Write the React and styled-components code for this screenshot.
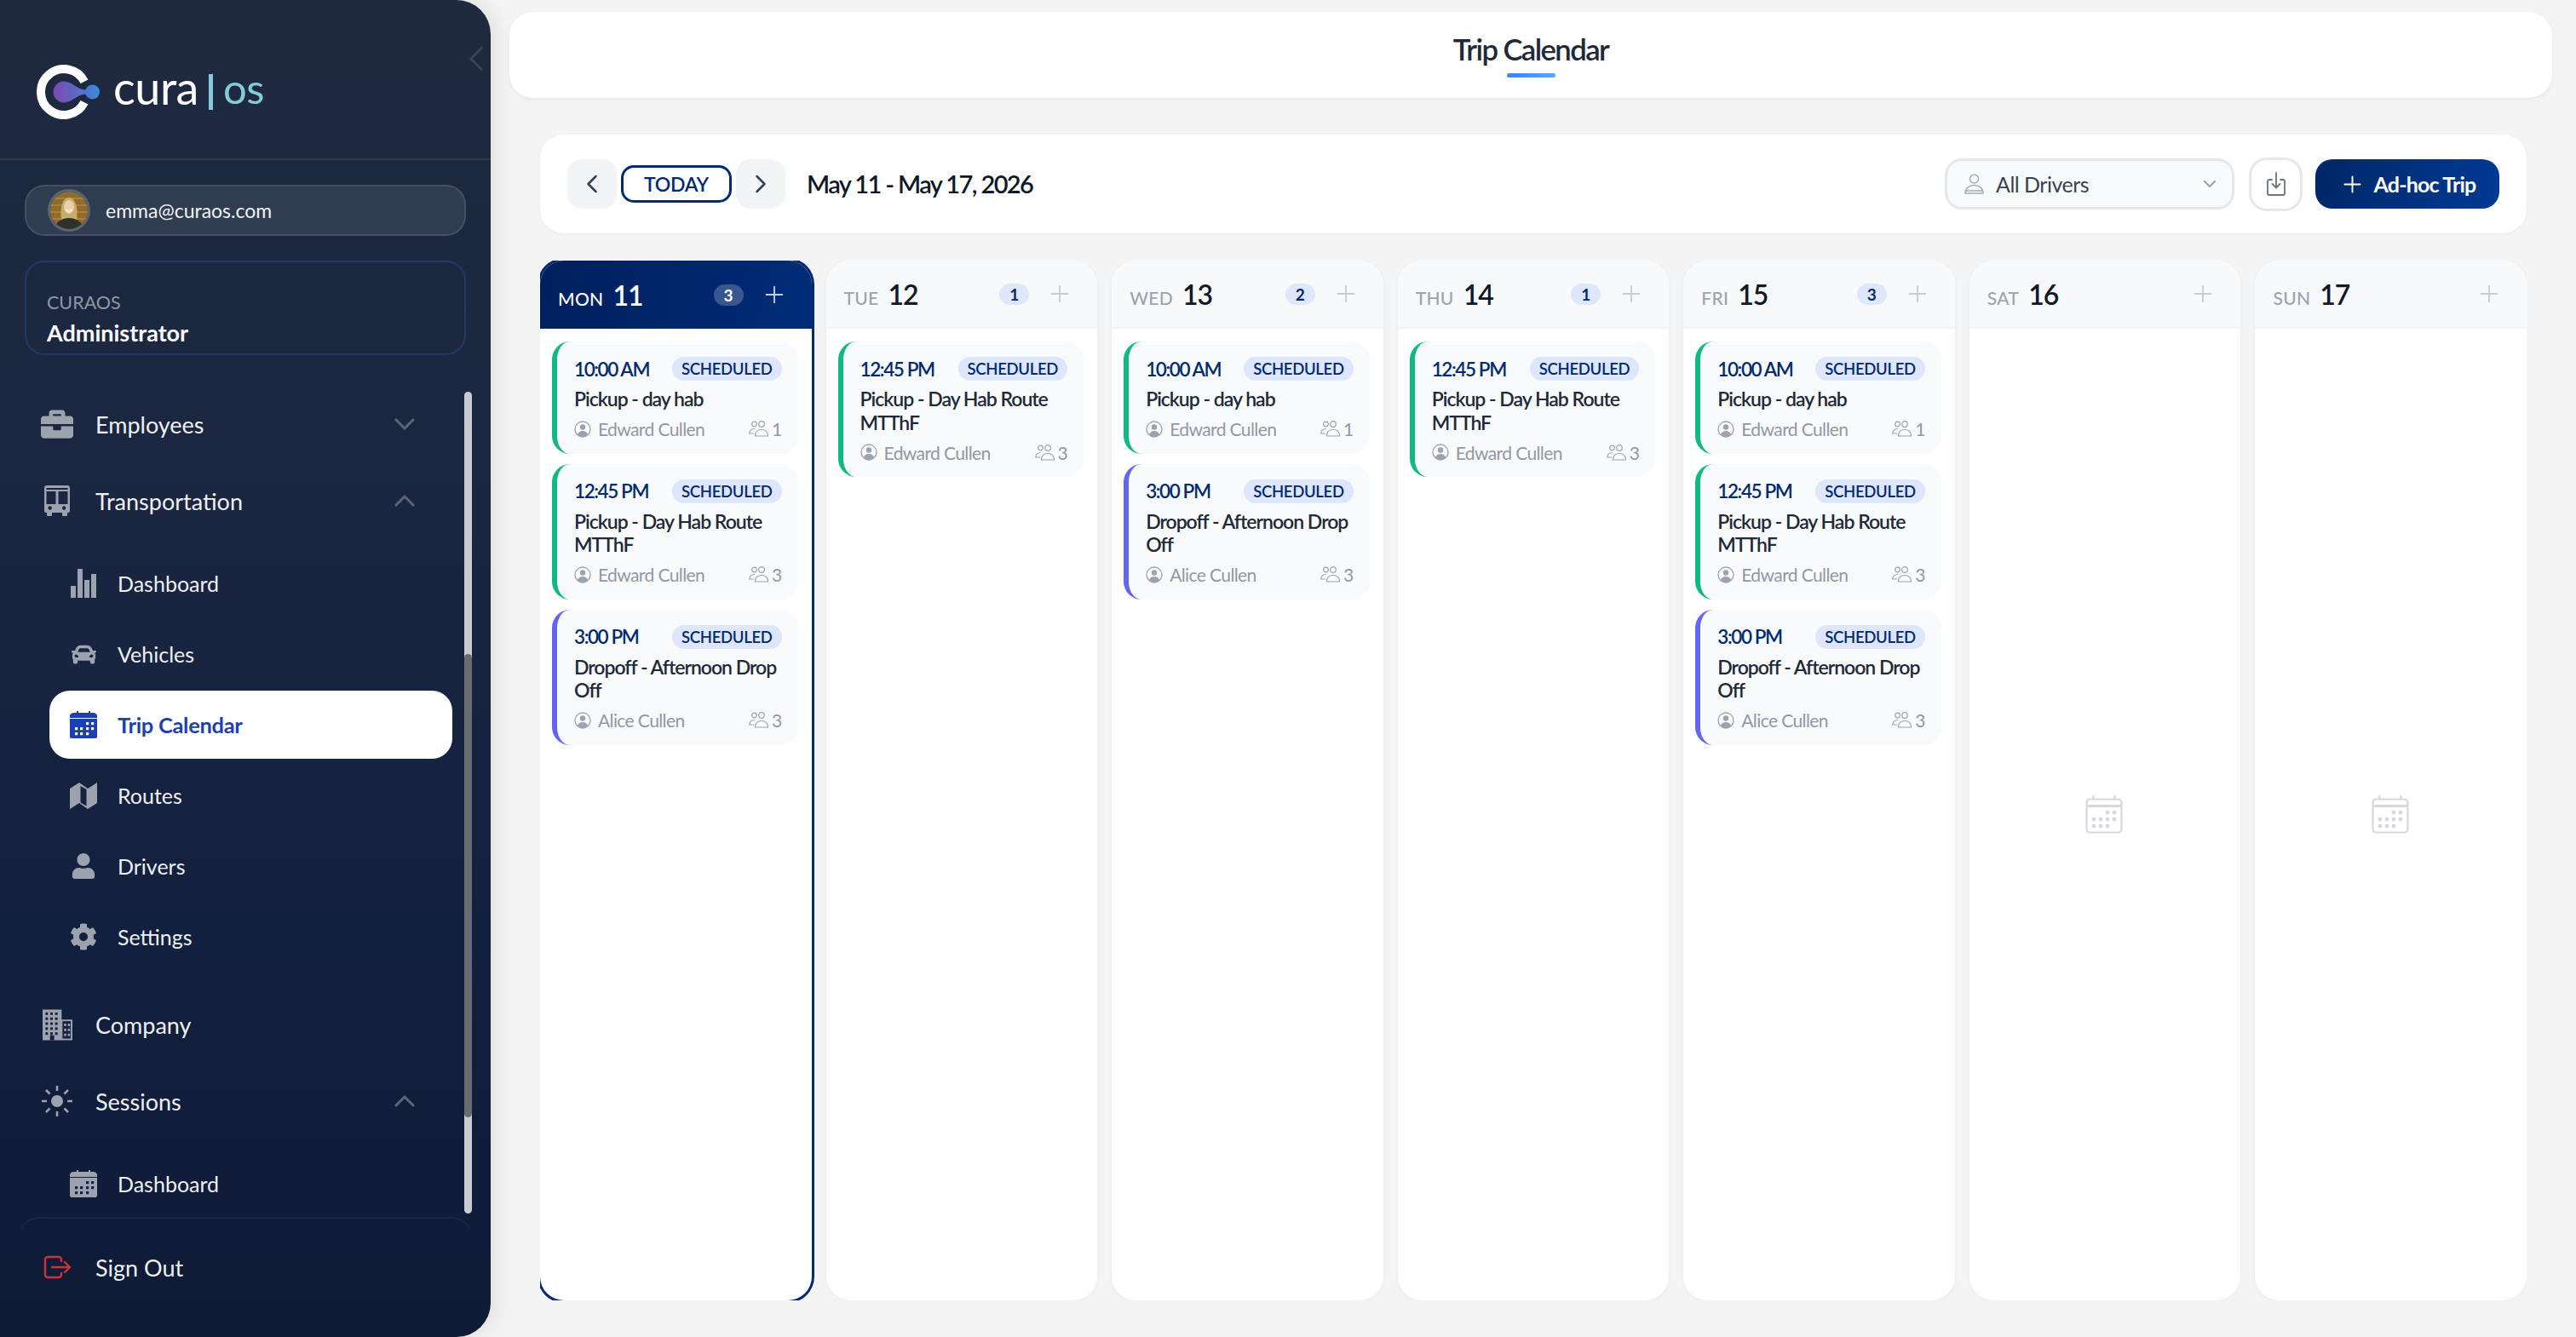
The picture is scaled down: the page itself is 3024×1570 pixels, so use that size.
import React from 'react';
import styled, { createGlobalStyle } from 'styled-components';
import { ChevronDown, ChevronLeft, ChevronRight, ChevronUp, Plus } from 'lucide-react';
import { FaBriefcase, FaCar, FaCog, FaUser } from 'react-icons/fa';

const NAVY = '#002a6e';

const GlobalStyle = createGlobalStyle`
  * { box-sizing: border-box; }
  html, body { margin: 0; padding: 0; height: 100%; }
  body {
    background: #f4f4f5;
    font-family: Lato, 'Liberation Sans', sans-serif;
    color: #1f2937;
  }
`;

/* ---------- drawings ---------- */

const LogoMark = () => (
  <svg width="74" height="64" viewBox="0 0 74 64">
    <defs>
      <linearGradient id="drop" gradientUnits="userSpaceOnUse" x1="19" y1="32" x2="74" y2="32">
        <stop offset="0" stopColor="#7d48ae" />
        <stop offset="1" stopColor="#3a8ad8" />
      </linearGradient>
    </defs>
    <path d="M56 19.7A27 27 0 1 0 56 44.3" fill="none" stroke="#fff" strokeWidth="10" />
    <path
      d="M32 19.5C42 19.5 46 29 58 29.5L58 34.5C46 35 42 44.5 32 44.5A12.5 12.5 0 0 1 32 19.5Z"
      fill="url(#drop)"
    />
    <circle cx="65.5" cy="32" r="8.5" fill="url(#drop)" />
  </svg>
);

const AvatarPhoto = () => (
  <svg width="44" height="44" viewBox="0 0 44 44">
    <rect width="44" height="44" fill="#8f6b2c" />
    <path d="M0 8h44M0 16h44M0 24h44M0 32h44" stroke="#b5873f" strokeWidth="1.4" />
    <path d="M13 33C11 17 15 7 22 7s11 10 9 26Z" fill="#c9ab68" />
    <ellipse cx="22" cy="18" rx="6" ry="8" fill="#ecd0ad" />
    <path d="M18.500 21c2 2.500 5 2.500 7 0" stroke="#fff" strokeWidth="1.500" fill="none" />
    <path d="M5 44c1-8 8-13 17-13s16 5 17 13Z" fill="#2f312d" />
  </svg>
);

const BarsIcon = () => (
  <svg width="30" height="34" viewBox="0 0 30 34" fill="#9ca3af">
    <rect x="0" y="20" width="6" height="14" />
    <rect x="8" y="0" width="6" height="34" />
    <rect x="16" y="13" width="6" height="21" />
    <rect x="24" y="6" width="6" height="28" />
  </svg>
);

const BusIcon = () => (
  <svg width="30" height="36" viewBox="0 0 30 36" fill="#9ca3af">
    <path
      fillRule="evenodd"
      d="M3 0h24a3 3 0 0 1 3 3v27a2 2 0 0 1-2 2h-1v3a1 1 0 0 1-1 1h-4a1 1 0 0 1-1-1v-3H9v3a1 1 0 0 1-1 1H4a1 1 0 0 1-1-1v-3H2a2 2 0 0 1-2-2V3a3 3 0 0 1 3-3ZM2.500 3v2h25V3ZM2.500 7v15h11V7ZM16.500 7v15h11V7ZM4.500 26.500a2.200 2.200 0 1 0 4.400 0a2.200 2.200 0 1 0-4.400 0ZM21 26.500a2.200 2.200 0 1 0 4.400 0a2.200 2.200 0 1 0-4.400 0Z"
    />
  </svg>
);

const MapIcon = () => (
  <svg width="32" height="31" viewBox="0 0 32 31" fill="#9ca3af">
    <path
      fillRule="evenodd"
      d="M0 7L11 0L21 7L32 0V24L21 31L11 24L0 31ZM12.500 4V23.500L19.500 27.500V8Z"
    />
  </svg>
);

const FilledCalendar = ({ color, hole }) => (
  <svg width="32" height="32" viewBox="0 0 32 32">
    <path d="M5 2h3V0h2v2h12V0h2v2h3a5 5 0 0 1 5 3v3H0V5a5 5 0 0 1 5-3Z" fill={color} />
    <path d="M0 9h32v21a2 2 0 0 1-2 2H2a2 2 0 0 1-2-2Z" fill={color} />
    {[
      [19, 13], [25, 13],
      [6, 19], [12, 19], [19, 19], [25, 19],
      [6, 25], [12, 25], [19, 25],
    ].map(([x, y]) => (
      <rect key={`${x}-${y}`} x={x} y={y} width="3.200" height="3.200" rx=".6" fill={hole} />
    ))}
  </svg>
);

const BuildingIcon = () => {
  const bigWindows = [];
  for (let row = 0; row < 5; row += 1) {
    for (let col = 0; col < 3; col += 1) {
      bigWindows.push([3.500 + col * 5.800, 3.500 + row * 6]);
    }
  }
  const smallWindows = [[26, 17], [30.500, 17], [26, 23], [30.500, 23], [26, 29], [30.500, 29]];
  return (
    <svg width="35" height="37" viewBox="0 0 36 37">
      <path d="M0 0h23v12h13v25H0Z" fill="#9ca3af" />
      {bigWindows.map(([x, y]) => (
        <rect key={`${x}-${y}`} x={x} y={y} width="3" height="3" fill="#15213e" />
      ))}
      <rect x="9" y="31" width="5" height="6" fill="#15213e" />
      <rect x="24" y="14" width="10" height="21" fill="#15213e" />
      {smallWindows.map(([x, y]) => (
        <rect key={`${x}-${y}`} x={x} y={y} width="2.600" height="3" fill="#9ca3af" />
      ))}
    </svg>
  );
};

const SunIcon = () => (
  <svg width="36" height="36" viewBox="0 0 36 36" stroke="#9ca3af" strokeWidth="2.600" fill="#9ca3af">
    <circle cx="18" cy="18" r="7" stroke="none" />
    <path d="M18 0v6M18 30v6M0 18h6M30 18h6M5 5l4.500 4.500M26.500 26.500L31 31M5 31l4.500-4.500M26.500 9.500L31 5" />
  </svg>
);

const SignOutIcon = () => (
  <svg width="33" height="28" viewBox="0 0 33 28" fill="none" stroke="#c8353b" strokeWidth="2.400" strokeLinecap="round" strokeLinejoin="round">
    <path d="M21 7V5a3 3 0 0 0-3-3H5a3 3 0 0 0-3 3v18a3 3 0 0 0 3 3h13a3 3 0 0 0 3-3v-2" />
    <path d="M10 14h21M25 8l6 6-6 6" />
  </svg>
);

const PersonRing = () => (
  <svg width="20" height="20" viewBox="0 0 20 20">
    <circle cx="10" cy="10" r="9" fill="none" stroke="#9ca3af" strokeWidth="1.300" />
    <circle cx="10" cy="7.500" r="3.200" fill="#9ca3af" />
    <path d="M3.800 16.400C5 13.200 7.300 12 10 12s5 1.200 6.200 4.400A9 9 0 0 1 3.800 16.400Z" fill="#9ca3af" />
  </svg>
);

const PeopleIcon = () => (
  <svg width="23" height="19" viewBox="0 0 23 19" fill="none" stroke="#9ca3af" strokeWidth="1.200">
    <circle cx="6.500" cy="4" r="2.800" />
    <circle cx="15" cy="4" r="3.300" />
    <path d="M7.500 18c0-5 2.800-7.500 7.500-7.500S22.500 13 22.500 18Z" />
    <path d="M7 9.500C3.500 9.500 1 11.500.6 15H6" />
  </svg>
);

const DriverIcon = () => (
  <svg width="23" height="24" viewBox="0 0 23 24" fill="none" stroke="#a3a9b5" strokeWidth="1.500">
    <circle cx="11.500" cy="6" r="5" />
    <path d="M1 23c0-6 4.500-9.500 10.500-9.500S22 17 22 23ZM1 20h21" />
  </svg>
);

const TrayDownIcon = () => (
  <svg width="22" height="28" viewBox="0 0 22 28" fill="none" stroke="#6b7280" strokeWidth="1.800" strokeLinecap="round" strokeLinejoin="round">
    <path d="M6 9H3a2 2 0 0 0-2 2v14a2 2 0 0 0 2 2h16a2 2 0 0 0 2-2V11a2 2 0 0 0-2-2h-3" />
    <path d="M11 1v17M6.500 14l4.500 4.500 4.500-4.500" />
  </svg>
);

const EmptyCalendar = () => (
  <svg width="44" height="45" viewBox="0 0 44 45" fill="none" stroke="#d5d8df" strokeWidth="2.200">
    <rect x="1.500" y="4.500" width="41" height="39" rx="4" />
    <path d="M1.500 12.500h41" strokeWidth="3" />
    <path d="M9.500 0v4M34.500 0v4" />
    <g fill="#d5d8df" stroke="none">
      {[
        [26, 20], [34, 20],
        [10, 28], [18, 28], [26, 28], [34, 28],
        [10, 36], [18, 36], [26, 36],
      ].map(([cx, cy]) => (
        <circle key={`${cx}-${cy}`} cx={cx} cy={cy} r="2.400" />
      ))}
    </g>
  </svg>
);

/* ---------- sidebar ---------- */

const Shell = styled.div`
  display: flex;
  height: 100vh;
  overflow: hidden;
  background: #f4f4f5;
`;

const Sidebar = styled.aside`
  position: relative;
  flex: 0 0 576px;
  display: flex;
  flex-direction: column;
  border-radius: 0 40px 40px 0;
  background: linear-gradient(180deg, #1f2a3f 0%, #1a2640 40%, #12203f 70%, #0f1a36 100%);
  box-shadow: 4px 0 24px rgba(0, 0, 0, 0.1);
  color: #eef0f3;
`;

const CollapseBtn = styled.span`
  position: absolute;
  top: 44px;
  right: -8px;
  color: #3a4559;
  line-height: 0;
`;

const Brand = styled.div`
  height: 188px;
  flex: none;
  display: flex;
  align-items: flex-start;
  padding: 76px 0 0 43px;
  border-bottom: 2px solid rgba(255, 255, 255, 0.07);
`;

const BrandWord = styled.div`
  display: flex;
  align-items: center;
  height: 64px;
  margin-left: 16px;
  font-size: 54px;
  line-height: 1;
  letter-spacing: -0.5px;
`;

const BrandName = styled.span`
  color: #fff;
  padding-bottom: 10px;
`;

const BrandBar = styled.i`
  display: block;
  width: 5px;
  height: 42px;
  margin: 0 12px;
  background: #84cbd7;
`;

const BrandOs = styled.span`
  color: #84cbd7;
  font-size: 49px;
  padding-bottom: 10px;
`;

const UserPill = styled.div`
  display: flex;
  align-items: center;
  height: 60px;
  margin: 29px 29px 0 29px;
  padding-left: 25px;
  gap: 18px;
  border: 2px solid rgba(255, 255, 255, 0.1);
  border-radius: 23px;
  background: #303c50;
  font-size: 23px;
  color: #f1f3f5;
`;

const Avatar = styled.span`
  width: 50px;
  height: 50px;
  flex: none;
  overflow: hidden;
  border: 3px solid #5b6473;
  border-radius: 50%;
  line-height: 0;
`;

const RoleBox = styled.div`
  height: 111px;
  margin: 29px 29px 41px 29px;
  padding: 34px 0 0 24px;
  border: 2px solid rgba(38, 72, 130, 0.55);
  border-radius: 23px;
`;

const RoleOrg = styled.div`
  font-size: 21.500px;
  line-height: 26px;
  color: #8f97a5;
`;

const RoleName = styled.div`
  margin-top: 5px;
  font-size: 27px;
  line-height: 36px;
  font-weight: 700;
  color: #fff;
`;

const Nav = styled.nav`
  position: relative;
  flex: 0 0 971px;
  overflow: hidden;
`;

const ScrollTrack = styled.div`
  position: absolute;
  top: 2px;
  left: 545px;
  width: 9px;
  height: 965px;
  border-radius: 5px;
  background: #c9cbd0;
`;

const ScrollThumb = styled.div`
  position: absolute;
  top: 308px;
  left: 0;
  width: 9px;
  height: 544px;
  border-radius: 5px;
  background: #6a6b70;
`;

const TopRow = styled.div`
  display: flex;
  align-items: center;
  width: 490px;
  height: 80px;
  margin-bottom: ${({ $after }) => $after}px;
  padding-left: 47px;
  font-size: 27px;
`;

const TopIcon = styled.span`
  display: flex;
  align-items: center;
  justify-content: center;
  width: 40px;
  flex: none;
  margin-right: 25px;
  color: #9ca3af;
`;

const RowLabel = styled.span`
  flex: 1;
`;

const Caret = styled.span`
  display: flex;
  color: #5a6473;
  line-height: 0;
  margin-right: -5px;
`;

const SubList = styled.div`
  display: flex;
  flex-direction: column;
  gap: 3px;
  margin: 17px 0 ${({ $after }) => $after}px 58px;
  width: 473px;
`;

const SubRow = styled.div`
  display: flex;
  align-items: center;
  height: 80px;
  padding-left: 20px;
  gap: 20px;
  border-radius: 24px;
  font-size: ${({ $active }) => ($active ? '25.500px' : '25px')};
  font-weight: ${({ $active }) => ($active ? 700 : 400)};
  letter-spacing: ${({ $active }) => ($active ? '-0.3px' : '0')};
  background: ${({ $active }) => ($active ? '#fff' : 'transparent')};
  color: ${({ $active }) => ($active ? '#1e40af' : '#eef0f3')};
`;

const SubIcon = styled.span`
  display: flex;
  align-items: center;
  justify-content: center;
  width: 40px;
  flex: none;
  color: #9ca3af;
`;

const SignOutWrap = styled.div`
  margin: 0 22px;
  padding-top: 17px;
  border-top: 2px solid rgba(255, 255, 255, 0.06);
  border-radius: 24px 24px 0 0;
`;

const SignOutRow = styled(TopRow)`
  padding-left: 25px;
  margin: 0;
`;

/* ---------- main ---------- */

const Main = styled.main`
  flex: 1;
  min-width: 0;
  display: flex;
  flex-direction: column;
  padding: 14px 28px 43px 22px;
`;

const TitleBar = styled.header`
  flex: none;
  height: 101px;
  display: flex;
  flex-direction: column;
  align-items: center;
  padding-top: 23px;
  border-radius: 28px;
  background: #fff;
  box-shadow: 0 2px 6px rgba(0, 0, 0, 0.05);
`;

const PageTitle = styled.h1`
  margin: 0;
  font-size: 34.700px;
  line-height: 42px;
  font-weight: 600;
  letter-spacing: -1.600px;
  color: #1f2937;
`;

const TitleLine = styled.div`
  width: 57px;
  height: 5px;
  margin-top: 7px;
  border-radius: 3px;
  background: linear-gradient(90deg, #3b82f6, #60a5fa);
`;

const Content = styled.div`
  flex: 1;
  min-height: 0;
  display: flex;
  flex-direction: column;
  gap: 32px;
  margin-top: 43px;
  padding: 0 30px 0 36px;
`;

const Toolbar = styled.div`
  flex: none;
  height: 116px;
  display: flex;
  align-items: center;
  padding: 0 32px;
  border-radius: 28px;
  background: #fff;
  box-shadow: 0 1px 4px rgba(0, 0, 0, 0.04);
`;

const NavBtn = styled.button`
  display: flex;
  align-items: center;
  justify-content: center;
  width: 58px;
  height: 58px;
  padding: 0;
  border: 0;
  border-radius: 17px;
  background: #f3f4f6;
  color: #374151;
`;

const TodayBtn = styled.button`
  width: 130px;
  height: 44px;
  margin: 0 5px;
  padding: 0;
  border: 3px solid ${NAVY};
  border-radius: 15px;
  background: #fff;
  font-family: inherit;
  font-size: 23px;
  font-weight: 600;
  letter-spacing: -0.3px;
  color: ${NAVY};
`;

const DateRange = styled.div`
  flex: 1;
  margin-left: 25px;
  padding-bottom: 2px;
  font-size: 29px;
  font-weight: 600;
  letter-spacing: -1.600px;
  color: #111827;
`;

const DriverSelect = styled.div`
  display: flex;
  align-items: center;
  width: 340px;
  height: 60px;
  padding: 0 14px 0 20px;
  gap: 14px;
  border: 3px solid #e5e7eb;
  border-radius: 20px;
  background: #f9fafb;
  font-size: 25px;
  letter-spacing: -0.5px;
  color: #374151;
`;

const SelectLabel = styled.span`
  flex: 1;
`;

const IconBtn = styled.button`
  display: flex;
  align-items: center;
  justify-content: center;
  width: 63px;
  height: 63px;
  margin: 0 15px 0 17px;
  padding: 0;
  border: 3px solid #e5e7eb;
  border-radius: 21px;
  background: #fff;
`;

const PrimaryBtn = styled.button`
  display: flex;
  align-items: center;
  justify-content: center;
  gap: 10px;
  width: 216px;
  height: 58px;
  padding: 0;
  border: 0;
  border-radius: 20px;
  background: linear-gradient(100deg, #002766, #003a94);
  font-family: inherit;
  font-size: 25px;
  font-weight: 700;
  letter-spacing: -0.800px;
  color: #fff;
`;

const WeekGrid = styled.div`
  flex: 1;
  min-height: 0;
  display: grid;
  grid-template-columns: repeat(7, minmax(0, 1fr));
  gap: 17px;
  overflow: hidden;
`;

const DayColumn = styled.section`
  display: flex;
  flex-direction: column;
  min-height: 0;
  overflow: hidden;
  border-radius: 28px;
  background: #fff;
  box-shadow: ${({ $today }) =>
    $today ? `0 0 0 3px ${NAVY}` : '0 1px 4px rgba(0, 0, 0, 0.05)'};
`;

const DayHeader = styled.div`
  flex: none;
  display: flex;
  align-items: center;
  height: 80px;
  padding: 0 26px 0 21px;
  background: ${({ $today }) =>
    $today ? 'linear-gradient(100deg, #001f5c, #002c78)' : '#f8f9fb'};
  border-bottom: ${({ $today }) => ($today ? '0' : '2px solid #f1f2f4')};
`;

const DayName = styled.span`
  font-size: 21px;
  font-weight: 500;
  letter-spacing: 0.3px;
  color: ${({ $today }) => ($today ? '#fff' : '#9ca3af')};
`;

const DayNumber = styled.span`
  margin-left: 11px;
  font-size: 32px;
  font-weight: 600;
  letter-spacing: -1px;
  color: ${({ $today }) => ($today ? '#fff' : '#111827')};
`;

const DayTitle = styled.div`
  flex: 1;
  display: flex;
  align-items: baseline;
`;

const CountBadge = styled.span`
  display: flex;
  align-items: center;
  justify-content: center;
  width: 35px;
  height: 25px;
  border-radius: 13px;
  font-size: 19px;
  font-weight: 700;
  background: ${({ $today }) => ($today ? 'rgba(255, 255, 255, 0.22)' : '#dfe7fd')};
  color: ${({ $today }) => ($today ? '#fff' : NAVY)};
`;

const AddBtn = styled.span`
  display: flex;
  align-items: center;
  justify-content: center;
  width: 36px;
  height: 36px;
  margin-left: 18px;
  color: ${({ $today }) => ($today ? '#c7d0e2' : '#c9ccd4')};
`;

const DayBody = styled.div`
  flex: 1;
  min-height: 0;
  display: flex;
  flex-direction: column;
  gap: 12px;
  padding: 15px 16px 15px 14px;
`;

const EmptyDay = styled.div`
  flex: 1;
  display: flex;
  align-items: center;
  justify-content: center;
`;

const TripCard = styled.article`
  padding: 18px 19px 18px 20px;
  border-left: 6px solid ${({ $accent }) => $accent};
  border-radius: 21px;
  background: #f9fafc;
`;

const TripTop = styled.div`
  display: flex;
  align-items: center;
  justify-content: space-between;
  height: 28px;
`;

const TripTime = styled.span`
  font-size: 22.500px;
  font-weight: 600;
  letter-spacing: -1.400px;
  color: ${NAVY};
`;

const StatusPill = styled.span`
  display: flex;
  align-items: center;
  height: 28px;
  padding: 0 11px;
  border-radius: 14px;
  background: #dde6fc;
  font-size: 18.500px;
  font-weight: 600;
  letter-spacing: -0.3px;
  color: ${NAVY};
`;

const TripName = styled.div`
  margin: 8px -6px 0 0;
  font-size: 23px;
  line-height: 27.500px;
  font-weight: 600;
  letter-spacing: -1px;
  color: #1f2937;
`;

const TripFoot = styled.div`
  display: flex;
  align-items: center;
  height: 22px;
  margin-top: 10px;
  font-size: 21px;
  letter-spacing: -0.6px;
  color: #9198a5;
`;

const DriverName = styled.span`
  flex: 1;
  margin-left: 8px;
`;

const Riders = styled.span`
  margin-left: 4px;
`;

const GREEN = '#10b981';
const INDIGO = '#6366f1';

const morning = { time: '10:00 AM', name: 'Pickup - day hab', driver: 'Edward Cullen', riders: 1, accent: GREEN };
const noon = { time: '12:45 PM', name: 'Pickup - Day Hab Route MTThF', driver: 'Edward Cullen', riders: 3, accent: GREEN };
const afternoon = { time: '3:00 PM', name: 'Dropoff - Afternoon Drop Off', driver: 'Alice Cullen', riders: 3, accent: INDIGO };

const days = [
  { label: 'Mon', date: 11, today: true, trips: [morning, noon, afternoon] },
  { label: 'Tue', date: 12, trips: [noon] },
  { label: 'Wed', date: 13, trips: [morning, afternoon] },
  { label: 'Thu', date: 14, trips: [noon] },
  { label: 'Fri', date: 15, trips: [morning, noon, afternoon] },
  { label: 'Sat', date: 16, trips: [] },
  { label: 'Sun', date: 17, trips: [] },
];

const transportItems = [
  { label: 'Dashboard', icon: <BarsIcon /> },
  { label: 'Vehicles', icon: <FaCar size={29} /> },
  { label: 'Trip Calendar', icon: <FilledCalendar color="#1e40af" hole="#fff" />, active: true },
  { label: 'Routes', icon: <MapIcon /> },
  { label: 'Drivers', icon: <FaUser size={30} /> },
  { label: 'Settings', icon: <FaCog size={32} /> },
];

const Trip = ({ trip }) => (
  <TripCard $accent={trip.accent}>
    <TripTop>
      <TripTime>{trip.time}</TripTime>
      <StatusPill>SCHEDULED</StatusPill>
    </TripTop>
    <TripName>{trip.name}</TripName>
    <TripFoot>
      <PersonRing />
      <DriverName>{trip.driver}</DriverName>
      <PeopleIcon />
      <Riders>{trip.riders}</Riders>
    </TripFoot>
  </TripCard>
);

const Day = ({ day }) => (
  <DayColumn $today={day.today}>
    <DayHeader $today={day.today}>
      <DayTitle>
        <DayName $today={day.today}>{day.label.toUpperCase()}</DayName>
        <DayNumber $today={day.today}>{day.date}</DayNumber>
      </DayTitle>
      {day.trips.length > 0 && <CountBadge $today={day.today}>{day.trips.length}</CountBadge>}
      <AddBtn $today={day.today}>
        <Plus size={32} strokeWidth={1.4} />
      </AddBtn>
    </DayHeader>
    <DayBody>
      {day.trips.map((trip, index) => (
        <Trip key={index} trip={trip} />
      ))}
      {day.trips.length === 0 && (
        <EmptyDay>
          <EmptyCalendar />
        </EmptyDay>
      )}
    </DayBody>
  </DayColumn>
);

const App = () => (
  <Shell>
    <GlobalStyle />
    <Sidebar>
      <CollapseBtn>
        <ChevronLeft size={50} strokeWidth={1.3} />
      </CollapseBtn>
      <Brand>
        <LogoMark />
        <BrandWord>
          <BrandName>cura</BrandName>
          <BrandBar />
          <BrandOs>os</BrandOs>
        </BrandWord>
      </Brand>
      <UserPill>
        <Avatar>
          <AvatarPhoto />
        </Avatar>
        emma@curaos.com
      </UserPill>
      <RoleBox>
        <RoleOrg>CURAOS</RoleOrg>
        <RoleName>Administrator</RoleName>
      </RoleBox>
      <Nav>
        <ScrollTrack>
          <ScrollThumb />
        </ScrollTrack>
        <TopRow $after={10}>
          <TopIcon>
            <FaBriefcase size={38} />
          </TopIcon>
          <RowLabel>Employees</RowLabel>
          <Caret>
            <ChevronDown size={40} strokeWidth={1.9} />
          </Caret>
        </TopRow>
        <TopRow $after={0}>
          <TopIcon>
            <BusIcon />
          </TopIcon>
          <RowLabel>Transportation</RowLabel>
          <Caret>
            <ChevronUp size={40} strokeWidth={1.9} />
          </Caret>
        </TopRow>
        <SubList $after={23}>
          {transportItems.map(item => (
            <SubRow key={item.label} $active={item.active}>
              <SubIcon>{item.icon}</SubIcon>
              {item.label}
            </SubRow>
          ))}
        </SubList>
        <TopRow $after={10}>
          <TopIcon>
            <BuildingIcon />
          </TopIcon>
          <RowLabel>Company</RowLabel>
        </TopRow>
        <TopRow $after={0}>
          <TopIcon>
            <SunIcon />
          </TopIcon>
          <RowLabel>Sessions</RowLabel>
          <Caret>
            <ChevronUp size={40} strokeWidth={1.9} />
          </Caret>
        </TopRow>
        <SubList $after={0}>
          <SubRow>
            <SubIcon>
              <FilledCalendar color="#9ca3af" hole="#11203f" />
            </SubIcon>
            Dashboard
          </SubRow>
        </SubList>
      </Nav>
      <SignOutWrap>
        <SignOutRow $after={0}>
          <TopIcon>
            <SignOutIcon />
          </TopIcon>
          <RowLabel>Sign Out</RowLabel>
        </SignOutRow>
      </SignOutWrap>
    </Sidebar>
    <Main>
      <TitleBar>
        <PageTitle>Trip Calendar</PageTitle>
        <TitleLine />
      </TitleBar>
      <Content>
        <Toolbar>
          <NavBtn>
            <ChevronLeft size={36} strokeWidth={1.7} />
          </NavBtn>
          <TodayBtn>TODAY</TodayBtn>
          <NavBtn>
            <ChevronRight size={36} strokeWidth={1.7} />
          </NavBtn>
          <DateRange>May 11 - May 17, 2026</DateRange>
          <DriverSelect>
            <DriverIcon />
            <SelectLabel>All Drivers</SelectLabel>
            <ChevronDown size={24} color="#9ca3af" strokeWidth={2.2} />
          </DriverSelect>
          <IconBtn>
            <TrayDownIcon />
          </IconBtn>
          <PrimaryBtn>
            <Plus size={31} strokeWidth={1.5} />
            Ad-hoc Trip
          </PrimaryBtn>
        </Toolbar>
        <WeekGrid>
          {days.map(day => (
            <Day key={day.label} day={day} />
          ))}
        </WeekGrid>
      </Content>
    </Main>
  </Shell>
);

export default App;
